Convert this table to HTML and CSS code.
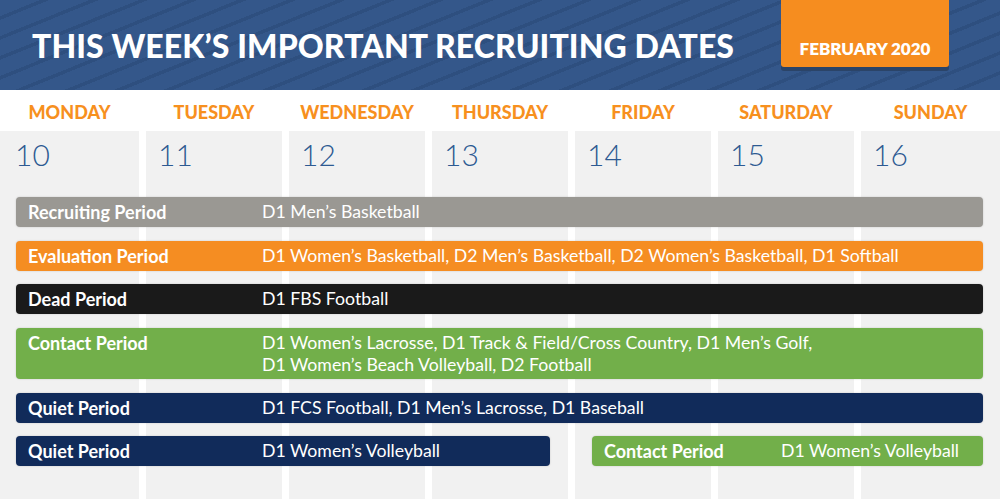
FILE: index.html
```html
<!DOCTYPE html>
<html lang="en">
<head>
<meta charset="utf-8">
<title>This Week's Important Recruiting Dates</title>
<link rel="stylesheet" href="styles.css">
</head>
<body>
<header class="header">
  <h1 class="title">THIS WEEK’S IMPORTANT RECRUITING DATES</h1>
  <div class="badge">FEBRUARY 2020</div>
</header>
<main class="calendar">
  <div class="dayname c1">MONDAY</div>
  <div class="dayname c2">TUESDAY</div>
  <div class="dayname c3">WEDNESDAY</div>
  <div class="dayname c4">THURSDAY</div>
  <div class="dayname c5">FRIDAY</div>
  <div class="dayname c6">SATURDAY</div>
  <div class="dayname c7">SUNDAY</div>

  <div class="day c1 first">10</div>
  <div class="day c2">11</div>
  <div class="day c3">12</div>
  <div class="day c4">13</div>
  <div class="day c5">14</div>
  <div class="day c6">15</div>
  <div class="day c7">16</div>

  <div class="bar gray r3 full"><span class="label">Recruiting Period</span><span class="detail">D1 Men’s Basketball</span></div>
  <div class="bar orange r4 full"><span class="label">Evaluation Period</span><span class="detail">D1 Women’s Basketball, D2 Men’s Basketball, D2 Women’s Basketball, D1 Softball</span></div>
  <div class="bar black r5 full"><span class="label">Dead Period</span><span class="detail">D1 FBS Football</span></div>
  <div class="bar green r6 full tall"><span class="label">Contact Period</span><span class="detail">D1 Women’s Lacrosse, D1 Track &amp; Field/Cross Country, D1 Men’s Golf,<br>D1 Women’s Beach Volleyball, D2 Football</span></div>
  <div class="bar navy r7 full"><span class="label">Quiet Period</span><span class="detail">D1 FCS Football, D1 Men’s Lacrosse, D1 Baseball</span></div>
  <div class="bar navy r8 left"><span class="label">Quiet Period</span><span class="detail">D1 Women’s Volleyball</span></div>
  <div class="bar green r8 right"><span class="label short">Contact Period</span><span class="detail">D1 Women’s Volleyball</span></div>
</main>
</body>
</html>
```

FILE: styles.css
```css
* { box-sizing: border-box; }
html, body { margin: 0; padding: 0; }
body {
  width: 1000px;
  height: 499px;
  overflow: hidden;
  background: #ffffff;
  font-family: Lato, "Open Sans", sans-serif;
}

.header {
  height: 90px;
  display: flex;
  align-items: flex-start;
  background-color: #34578a;
  background-image: repeating-linear-gradient(158deg, #34578a 0px, #34578a 15px, #2e4f7f 15px, #2e4f7f 18.5px);
}
.title {
  margin: 0;
  padding: 28px 0 0 32px;
  color: #ffffff;
  font-size: 32px;
  font-weight: 900;
  line-height: 36px;
  letter-spacing: 0.1px;
}
.badge {
  margin-left: auto;
  margin-right: 51px;
  width: 168px;
  height: 67px;
  background: #f68d1f;
  border-radius: 0 0 3px 3px;
  box-shadow: 0 4px 0 #2b4468;
  color: #ffffff;
  font-size: 17px;
  font-weight: 800;
  display: flex;
  align-items: flex-end;
  justify-content: center;
  padding-bottom: 8px;
  line-height: 20px;
}

.calendar {
  height: 409px;
  display: grid;
  grid-template-columns: 139px repeat(5, 1fr) 139px;
  column-gap: 7px;
  grid-template-rows: 41px 66px auto auto auto auto auto auto 1fr;
}
.c1 { grid-column: 1; }
.c2 { grid-column: 2; }
.c3 { grid-column: 3; }
.c4 { grid-column: 4; }
.c5 { grid-column: 5; }
.c6 { grid-column: 6; }
.c7 { grid-column: 7; }

.dayname {
  grid-row: 1;
  color: #f7901e;
  font-size: 18px;
  font-weight: 900;
  text-align: center;
  padding-top: 11px;
  line-height: 22px;
}
.day {
  grid-row: 2 / -1;
  background: #f1f1f1;
  color: #2d5a92;
  font-size: 30px;
  font-weight: 300;
  line-height: 36px;
  padding: 5px 0 0 12px;
}
.day.first { padding-left: 15px; }

.bar {
  position: relative;
  z-index: 1;
  height: 30px;
  margin-bottom: 13.5px;
  border-radius: 4px;
  box-shadow: 0 0 2px rgba(0, 0, 0, 0.18);
  color: #ffffff;
  font-size: 17.7px;
  line-height: 22px;
  display: flex;
  align-items: center;
  padding-left: 12px;
}
.bar.tall {
  height: 51.5px;
  align-items: flex-start;
  padding-top: 4px;
}
.r3 { grid-row: 3; }
.r4 { grid-row: 4; }
.r5 { grid-row: 5; }
.r6 { grid-row: 6; }
.r7 { grid-row: 7; }
.r8 { grid-row: 8; }
.full { grid-column: 1 / -1; margin-left: 16px; margin-right: 17px; }
.left { grid-column: 1 / 5; margin-left: 16px; margin-right: 18px; }
.right { grid-column: 5 / -1; margin-left: 17px; margin-right: 17px; }

.label {
  font-weight: 700;
  font-size: 18px;
  width: 234px;
  flex: none;
}
.label.short { width: 177px; }
.detail { font-weight: 400; }

.gray { background: #9a9893; }
.orange { background: #f58d22; }
.black { background: #1a1a1a; }
.green { background: #72af4a; }
.navy { background: #112b5a; }
```
